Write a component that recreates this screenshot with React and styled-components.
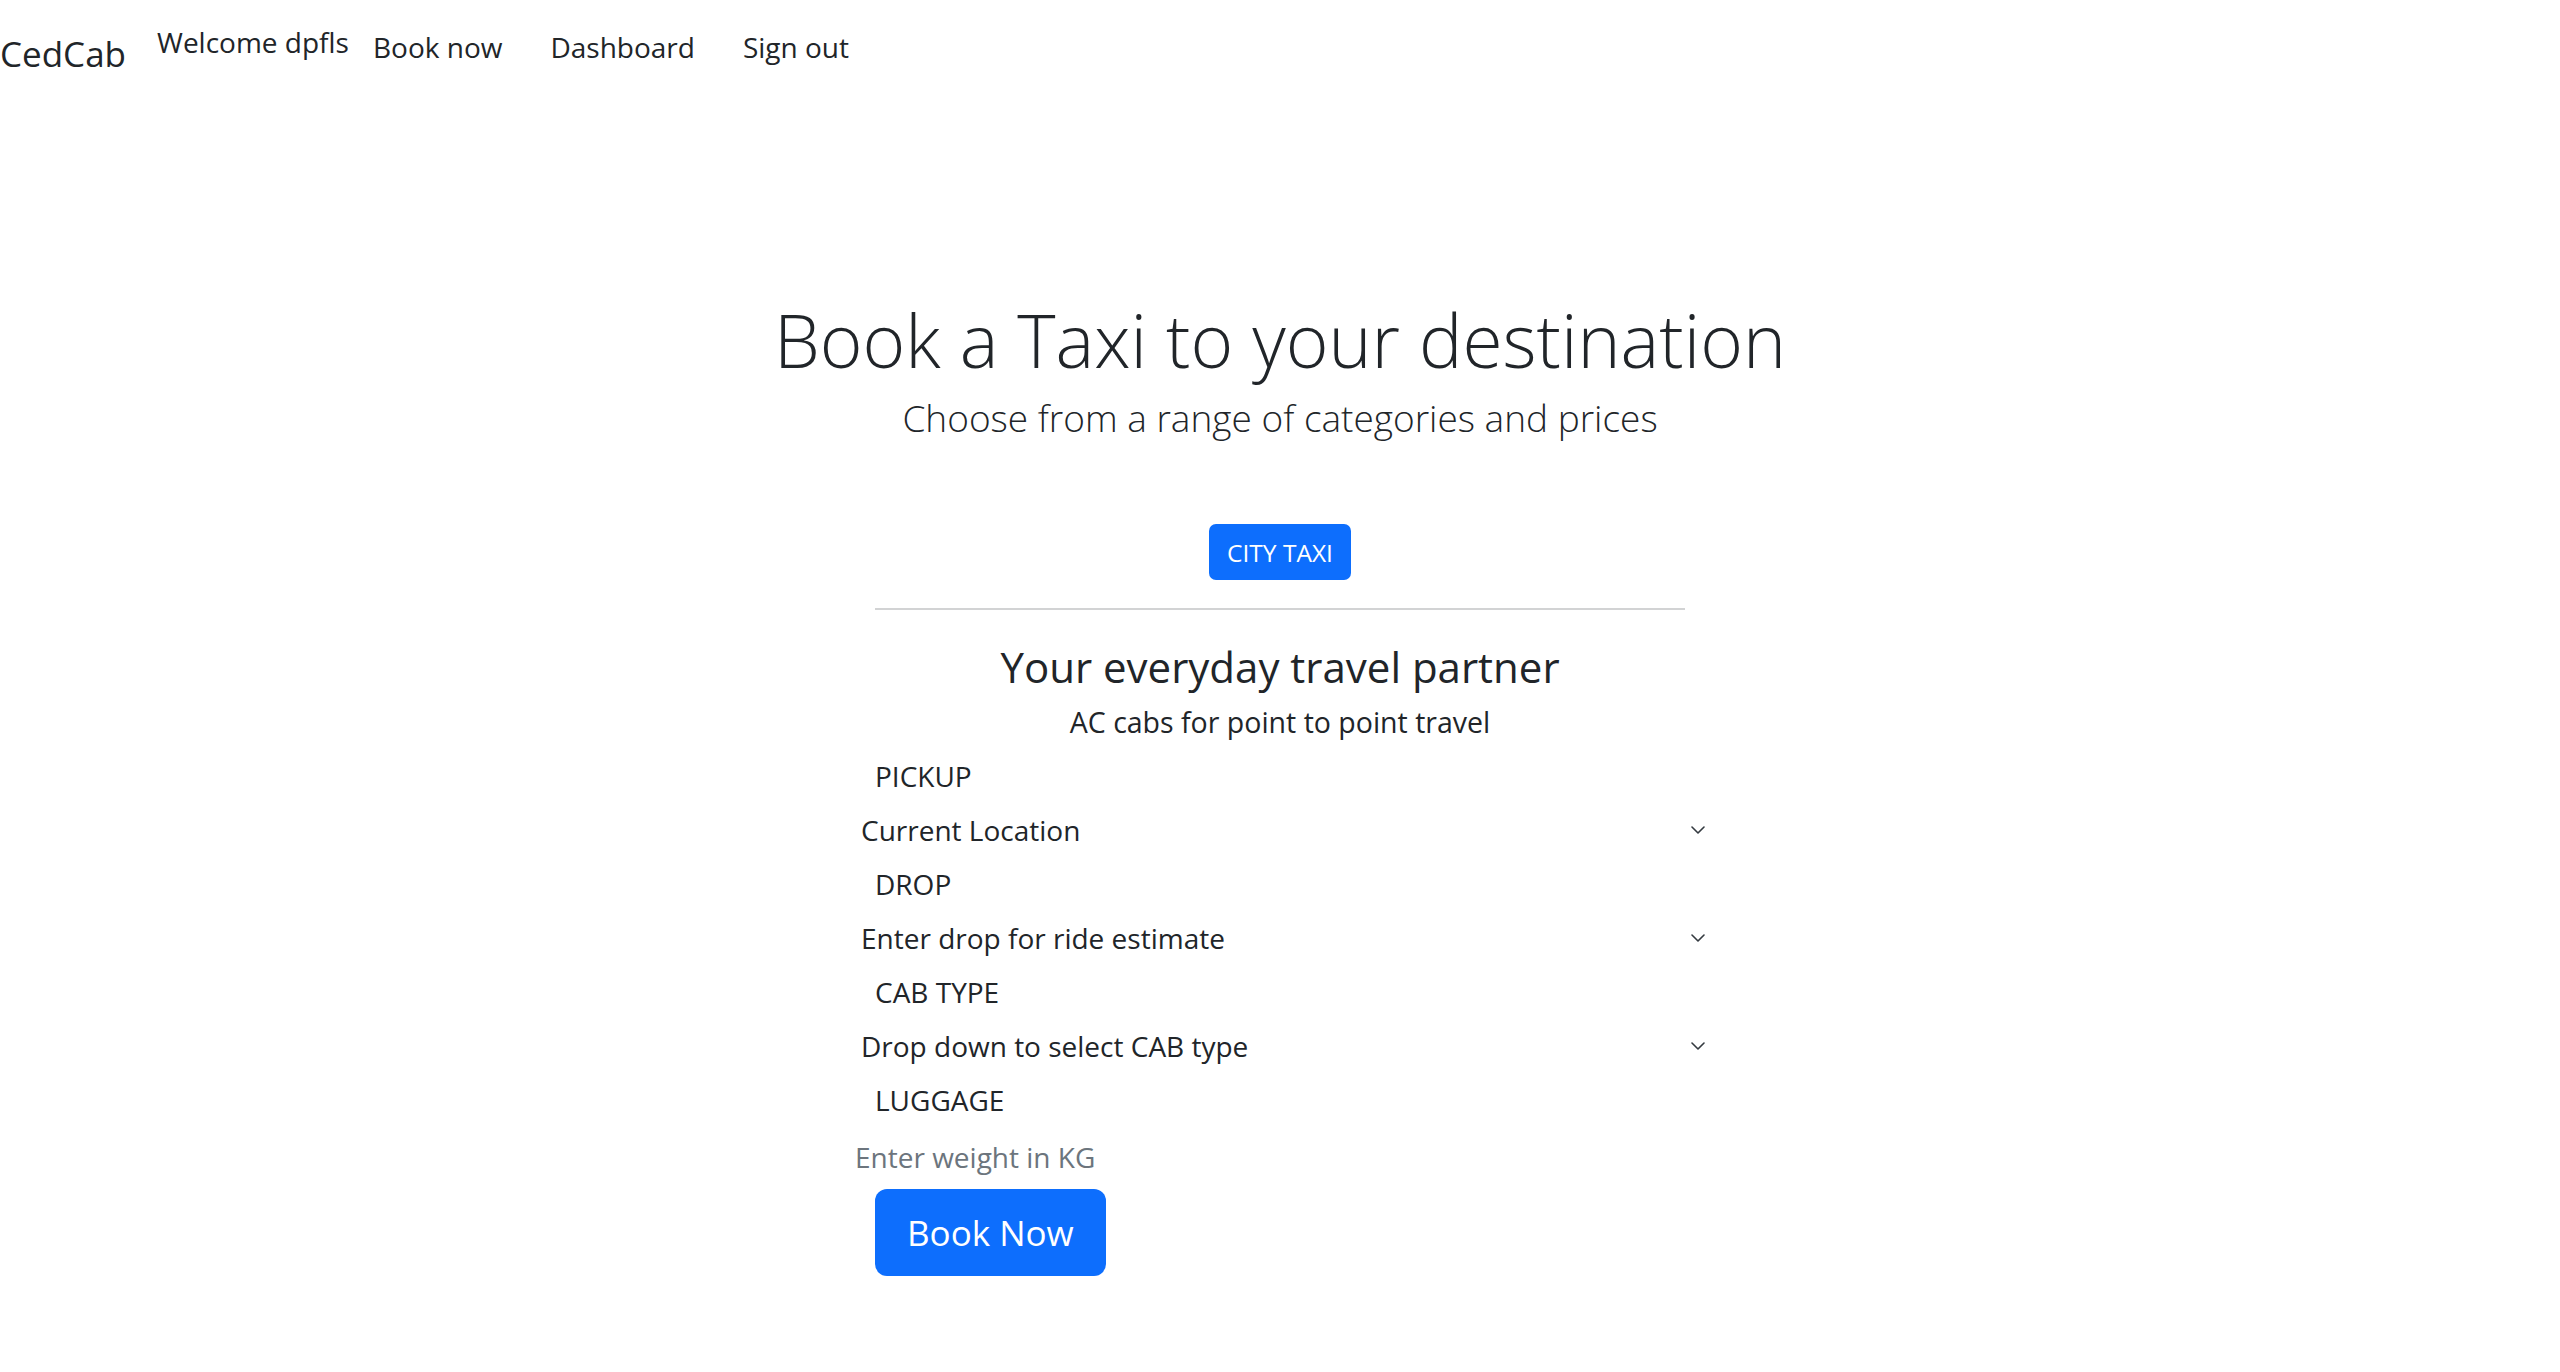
import styled, { createGlobalStyle } from "styled-components";

const GlobalStyle = createGlobalStyle`
  body {
    margin: 0;
    font-family: "Open Sans", "Noto Sans", sans-serif;
    color: #212529;
    background: #fff;
  }
  * {
    box-sizing: border-box;
  }
`;

const Page = styled.div`
  min-height: 1360px;
`;

const Navbar = styled.nav`
  display: flex;
  align-items: flex-start;
  height: 81px;
`;

const Brand = styled.a`
  font-size: 35px;
  line-height: 52.5px;
  padding-top: 28px;
  margin-right: 31px;
  color: #212529;
  text-decoration: none;
`;

const NavText = styled.span`
  font-size: 28px;
  line-height: 42px;
  padding: ${(p) => p.$top || 0}px ${(p) => p.$px || 0}px 0;
  color: #212529;
  text-decoration: none;
  white-space: nowrap;
`;

const Main = styled.main`
  width: 810px;
  margin: 0 auto;
  display: flex;
  flex-direction: column;
  align-items: center;
`;

const Title = styled.h1`
  margin: 216px 0 0;
  font-size: 73px;
  font-weight: 300;
  line-height: 86px;
  white-space: nowrap;
`;

const Lead = styled.p`
  margin: 8px 0 0;
  font-size: 37px;
  font-weight: 300;
  line-height: 53px;
  white-space: nowrap;
`;

const Button = styled.button`
  border: none;
  background: #0d6efd;
  color: #fff;
  font-family: inherit;
  cursor: pointer;
  font-size: ${(p) => (p.$lg ? 35 : 24.5)}px;
  height: ${(p) => (p.$lg ? 87 : 56)}px;
  padding: 0 ${(p) => (p.$lg ? 32 : 18)}px;
  border-radius: ${(p) => (p.$lg ? 12 : 7)}px;
  margin-top: ${(p) => p.$mt || 0}px;
  margin-left: ${(p) => p.$ml || 0}px;
`;

const Rule = styled.hr`
  width: 100%;
  margin: 28px 0 0;
  border: none;
  border-top: 2px solid #d2d3d4;
`;

const SubTitle = styled.h4`
  margin: 32px 0 0;
  font-size: 42px;
  font-weight: 400;
  line-height: 50.4px;
  white-space: nowrap;
`;

const Text = styled.p`
  margin: 9px 0 0;
  font-size: 28.5px;
  line-height: 42px;
`;

const Form = styled.form`
  align-self: flex-start;
  margin: 12px 0 0 -35px;
  width: 893px;
  display: flex;
  flex-direction: column;
  align-items: flex-start;
`;

const Label = styled.label`
  padding-left: 35px;
  font-size: 28px;
  line-height: 42px;
`;

const SelectWrap = styled.div`
  position: relative;
  width: 100%;
  height: 66px;
`;

const Select = styled.select`
  appearance: none;
  width: 100%;
  height: 100%;
  border: none;
  outline: none;
  background: transparent;
  padding: 0 56px 0 21px;
  font-family: inherit;
  font-size: 28px;
  color: #212529;
`;

const Chevron = styled.svg`
  position: absolute;
  right: 28px;
  top: 50%;
  margin-top: -4px;
  width: 14px;
  height: 8px;
  pointer-events: none;
`;

const Input = styled.input`
  margin: 3px 0 0 -6px;
  width: 100%;
  height: 66px;
  border: none;
  outline: none;
  padding: 0 21px;
  font-family: inherit;
  font-size: 28px;
  color: #212529;
  &::placeholder {
    color: #6c757d;
  }
`;

const Field = ({ label, placeholder }) => (
  <>
    <Label>{label}</Label>
    <SelectWrap>
      <Select defaultValue="">
        <option value="">{placeholder}</option>
      </Select>
      <Chevron viewBox="0 0 14 8">
        <path d="M1 1l6 6 6-6" fill="none" stroke="#343a40" strokeWidth="1.6" strokeLinecap="round" strokeLinejoin="round" />
      </Chevron>
    </SelectWrap>
  </>
);

export default function App() {
  return (
    <Page>
      <GlobalStyle />
      <Navbar>
        <Brand href="#">CedCab</Brand>
        <NavText $top={21}>Welcome dpfls</NavText>
        <NavText as="a" href="#" $top={26} $px={24}>Book now</NavText>
        <NavText as="a" href="#" $top={26} $px={24}>Dashboard</NavText>
        <NavText as="a" href="#" $top={26} $px={24}>Sign out</NavText>
      </Navbar>
      <Main>
        <Title>Book a Taxi to your destination</Title>
        <Lead>Choose from a range of categories and prices</Lead>
        <Button $mt={80}>CITY TAXI</Button>
        <Rule />
        <SubTitle>Your everyday travel partner</SubTitle>
        <Text>AC cabs for point to point travel</Text>
        <Form onSubmit={(e) => e.preventDefault()}>
          <Field label="PICKUP" placeholder="Current Location" />
          <Field label="DROP" placeholder="Enter drop for ride estimate" />
          <Field label="CAB TYPE" placeholder="Drop down to select CAB type" />
          <Label>LUGGAGE</Label>
          <Input placeholder="Enter weight in KG" />
          <Button $lg $mt={-1} $ml={35}>Book Now</Button>
        </Form>
      </Main>
    </Page>
  );
}
